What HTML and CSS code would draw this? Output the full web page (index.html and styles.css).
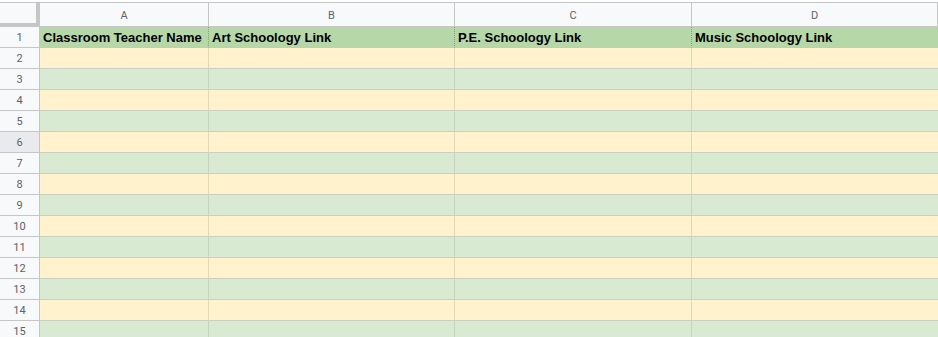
FILE: index.html
```html
<!DOCTYPE html>
<html>
<head>
<meta charset="utf-8">
<link rel="stylesheet" href="styles.css">
</head>
<body>
<div class="sheet" id="sheet">
  <div class="corner"></div>
  <div class="colhead">A</div>
  <div class="colhead">B</div>
  <div class="colhead">C</div>
  <div class="colhead">D</div>

  <div class="rowhead">1</div>
  <div class="cell title">Classroom Teacher Name</div>
  <div class="cell title">Art Schoology Link</div>
  <div class="cell title">P.E. Schoology Link</div>
  <div class="cell title last">Music Schoology Link</div>
</div>
<script src="app.js"></script>
</body>
</html>
```

FILE: app.js
```js
var sheet = document.getElementById('sheet');
for (var r = 2; r <= 15; r++) {
  var h = document.createElement('div');
  h.className = 'rowhead' + (r === 6 ? ' sel' : '');
  h.textContent = r;
  sheet.appendChild(h);
  for (var c = 0; c < 4; c++) {
    var d = document.createElement('div');
    d.className = 'cell ' + (r % 2 === 0 ? 'yellow' : 'green') + (c === 3 ? ' last' : '');
    sheet.appendChild(d);
  }
}
```

FILE: styles.css
```css
html, body {
  margin: 0;
  padding: 0;
  background: #ffffff;
  overflow: hidden;
}
body {
  padding-top: 2px;
}
.sheet {
  display: grid;
  grid-template-columns: 40px 169px 246px 237px 1fr;
  grid-template-rows: 24px;
  grid-auto-rows: 21px;
  border-top: 1px solid #c4c7c5;
  width: 938px;
  font-family: "Liberation Sans", Arial, sans-serif;
}
.corner {
  background: #f8f9fa;
  border-right: 4px solid #c4c7c5;
  border-bottom: 4px solid #c4c7c5;
  box-sizing: border-box;
}
.colhead {
  background: #f8f9fa;
  border-right: 1px solid #c4c7c5;
  border-bottom: 1px solid #c4c7c5;
  box-sizing: border-box;
  display: flex;
  align-items: center;
  justify-content: center;
  font-family: Roboto, "Liberation Sans", sans-serif;
  font-size: 11px;
  color: #5f6368;
  padding-top: 1px;
}
.rowhead {
  background: #f8f9fa;
  border-right: 1px solid #c4c7c5;
  border-bottom: 1px solid #c4c7c5;
  box-sizing: border-box;
  display: flex;
  align-items: center;
  justify-content: center;
  font-family: Roboto, "Liberation Sans", sans-serif;
  font-size: 11px;
  color: #5f6368;
}
.rowhead.sel {
  background: #e8eaed;
}
.cell {
  box-sizing: border-box;
  border-right: 1px solid #d8d2b8;
  border-bottom: 1px solid #c9d0c3;
  overflow: hidden;
  white-space: nowrap;
}
.cell.title {
  background: #b6d7a8;
  border-right: 1px dotted #7fa474;
  border-bottom: 1px solid #c2cdb9;
  font-weight: bold;
  font-size: 13px;
  color: #000000;
  padding: 0 3px;
  display: flex;
  align-items: flex-end;
  padding-bottom: 2px;
}
.cell.yellow {
  background: #fff2cc;
  border-right-color: #e3d8b3;
}
.cell.green {
  background: #d9ead3;
  border-right-color: #c6d4c0;
}
.cell.last {
  border-right: none;
}
```
